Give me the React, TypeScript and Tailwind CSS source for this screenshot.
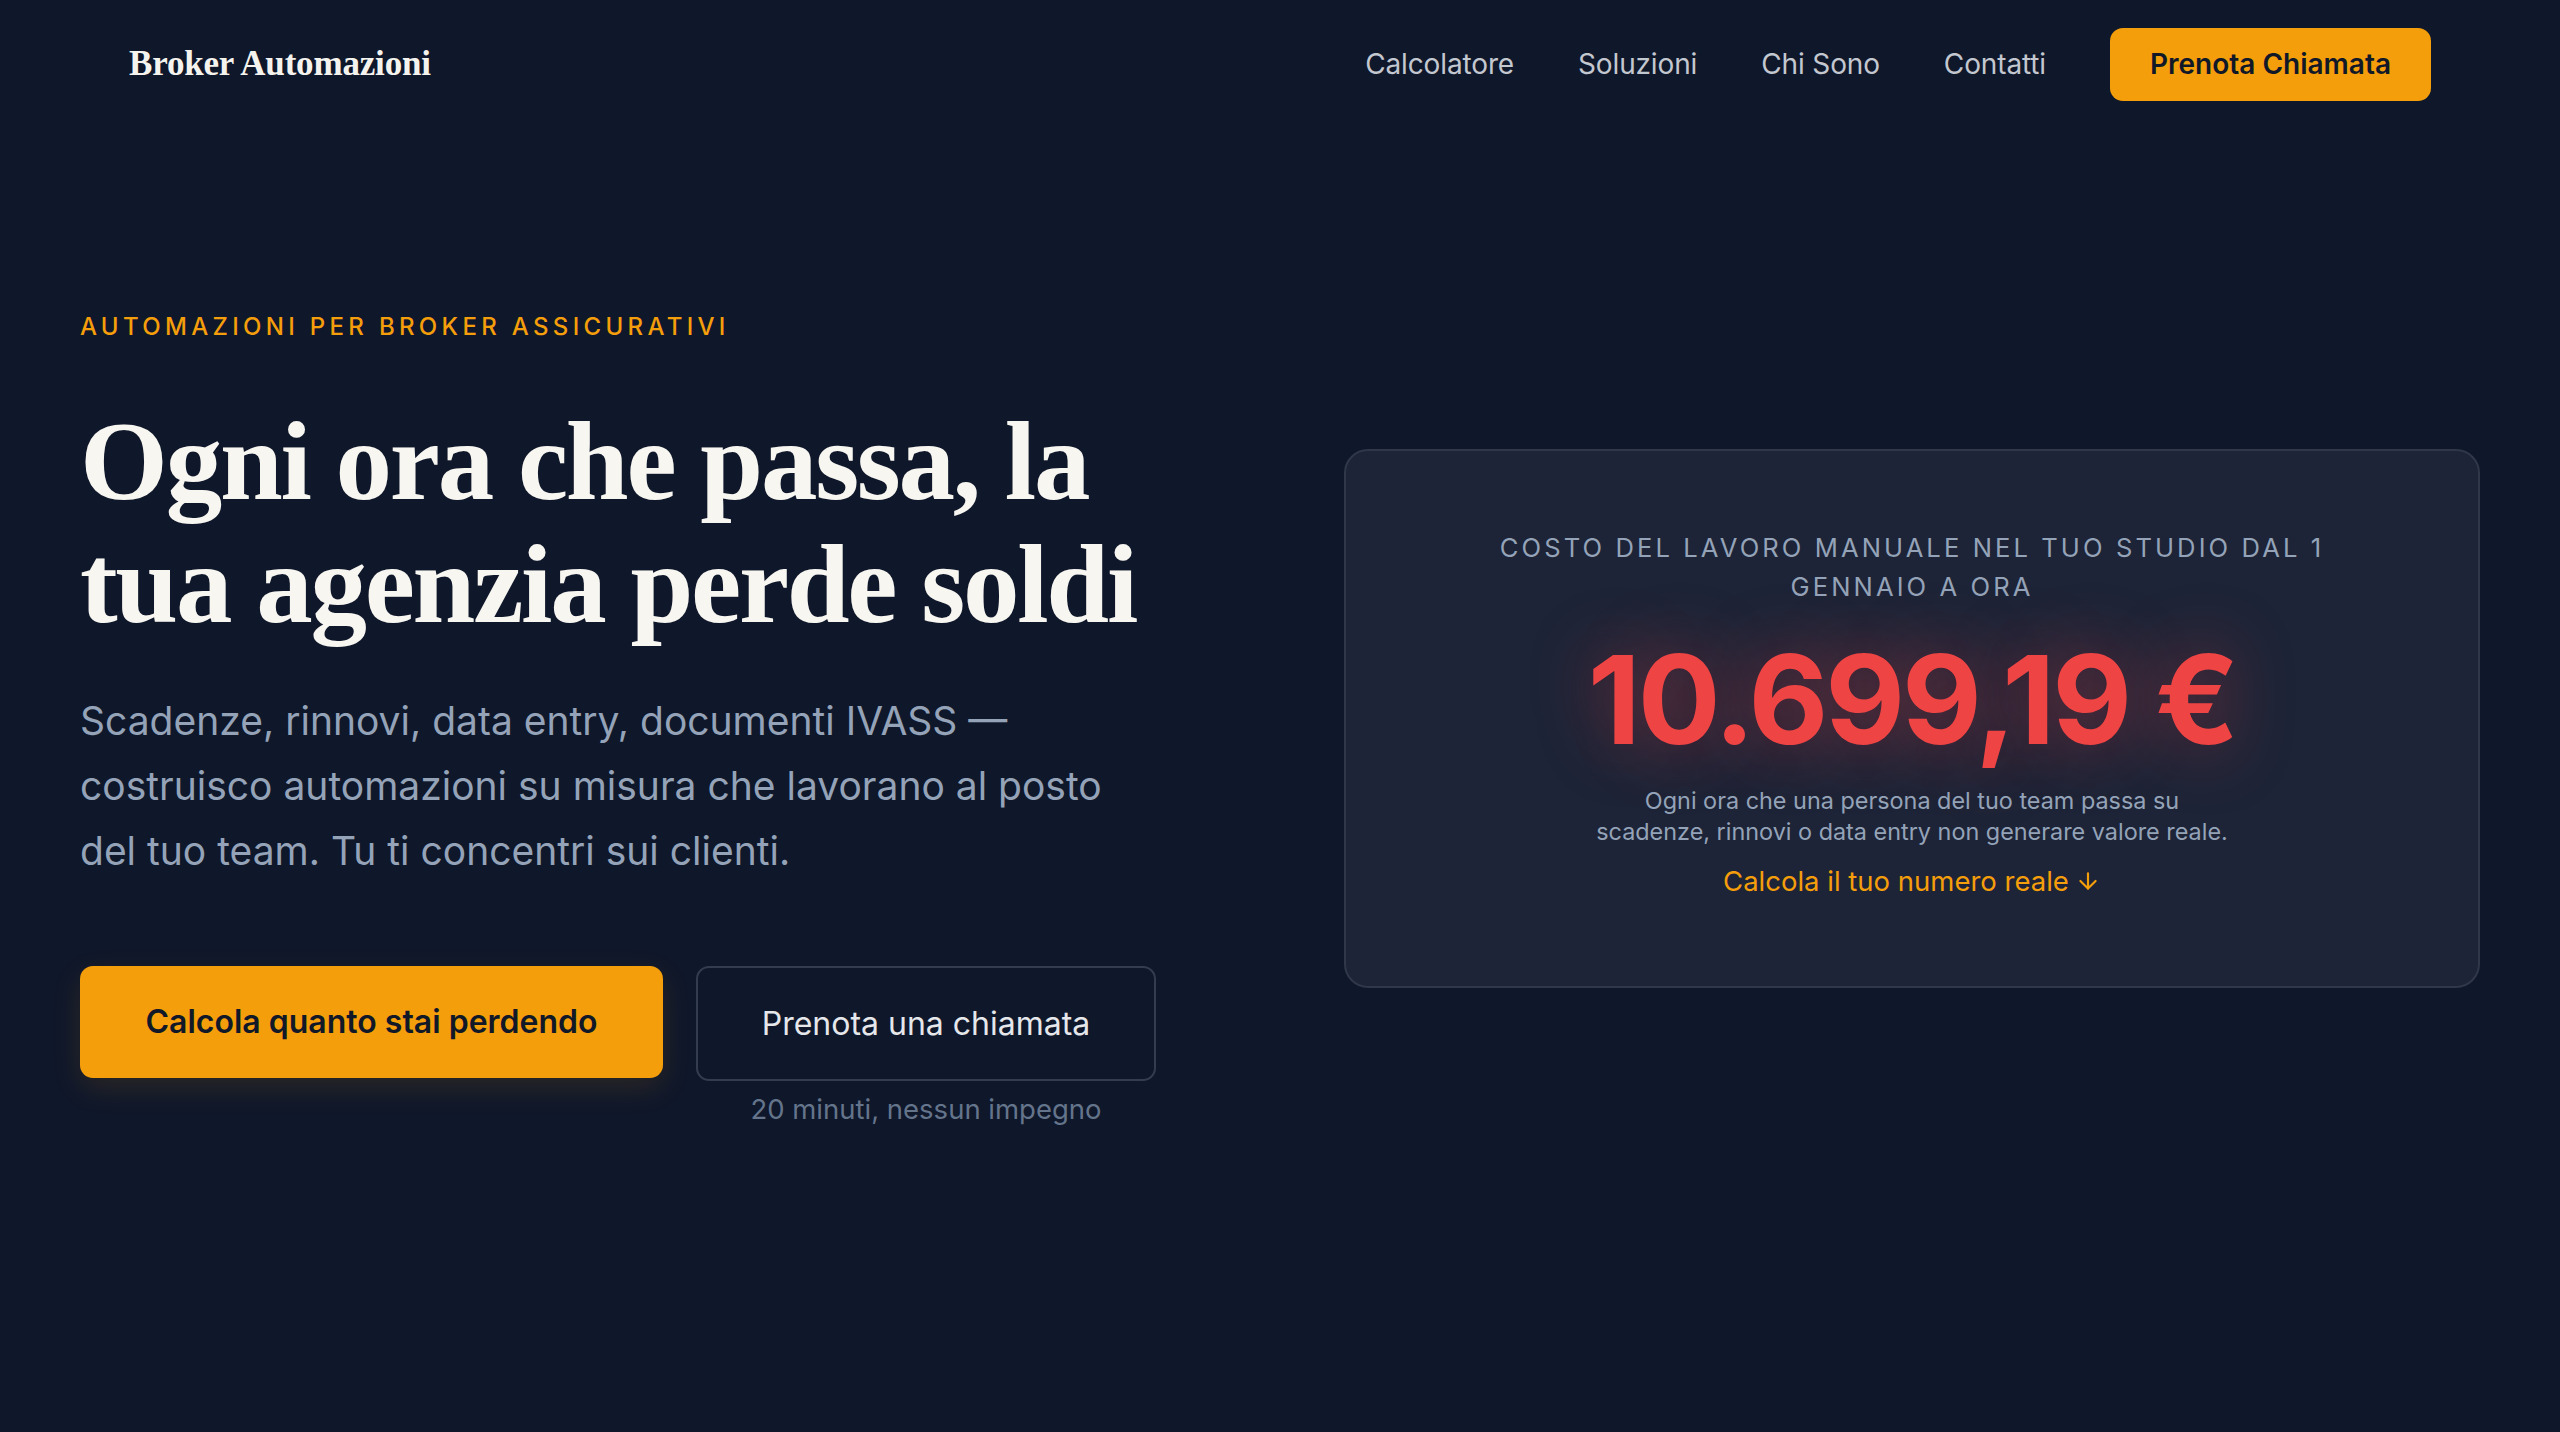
import { ArrowDown } from "lucide-react";

const sans = "font-['Inter','Noto_Sans',sans-serif]";
const serif = "font-['Liberation_Serif','Times_New_Roman',serif]";

function Header() {
  return (
    <header className="flex h-[128px] items-center justify-between px-[129px]">
      <a className={`${serif} text-[35px] font-bold tracking-[-0.005em] text-[#f5f3ee]`}>Broker Automazioni</a>
      <nav className="flex items-center gap-[64px] text-[28px] tracking-[-0.005em] text-[#c3c7cf]">
        <a>Calcolatore</a>
        <a>Soluzioni</a>
        <a>Chi Sono</a>
        <a>Contatti</a>
        <a className="flex h-[73px] items-center rounded-[13px] bg-[#f59e0b] px-[40px] font-semibold tracking-normal text-[#111827]">
          Prenota Chiamata
        </a>
      </nav>
    </header>
  );
}

function CostCard() {
  return (
    <div className="flex h-[539px] flex-col items-center rounded-[24px] border-2 border-[#2f3749] bg-[#1d2437] pt-[77px] text-center">
      <p className="text-[25.6px] leading-[39px] tracking-[0.12em] text-[#94a3b8]">
        COSTO DEL LAVORO MANUALE NEL TUO STUDIO DAL 1<br />GENNAIO A ORA
      </p>
      <p className="mt-[32px] text-[123px] font-bold leading-none tracking-[-0.025em] text-[#ef4444] [text-shadow:0_0_70px_rgba(239,68,68,0.45)]">
        10.699,19 €
      </p>
      <p className="mt-[24px] text-[23.4px] leading-[31px] text-[#94a3b8]">
        Ogni ora che una persona del tuo team passa su
        <br />
        scadenze, rinnovi o data entry non generare valore reale.
      </p>
      <a className="mt-[15px] flex items-center gap-[6px] text-[27.5px] leading-[38px] text-[#f59e0b]">
        Calcola il tuo numero reale
        <ArrowDown size={26} strokeWidth={2} />
      </a>
    </div>
  );
}

export default function App() {
  return (
    <div className={`${sans} min-h-[1432px] bg-[#0f172a] antialiased`}>
      <Header />
      <main className="grid grid-cols-2 items-center gap-[128px] px-[80px] pt-[181px]">
        <div>
          <p className="text-[24px] font-medium leading-[36px] tracking-[0.18em] text-[#f59e0b]">
            AUTOMAZIONI PER BROKER ASSICURATIVI
          </p>
          <h1 className={`${serif} mt-[54px] text-[113px] font-bold leading-[123px] tracking-[-0.02em] text-[#f8f6f1]`}>
            Ogni ora che passa, la
            <br />
            tua agenzia perde soldi
          </h1>
          <p className="mt-[43px] text-[39px] leading-[65px] text-[#94a3b8]">
            Scadenze, rinnovi, data entry, documenti IVASS —
            <br />
            costruisco automazioni su misura che lavorano al posto
            <br />
            del tuo team. Tu ti concentri sui clienti.
          </p>
          <div className="mt-[83px] flex items-start gap-[33px]">
            <a className="flex h-[112px] w-[583px] items-center justify-center rounded-[13px] bg-[#f59e0b] text-[32px] font-semibold text-[#111827] shadow-[0_10px_30px_rgba(245,158,11,0.12)]">
              Calcola quanto stai perdendo
            </a>
            <div className="flex w-[460px] flex-col items-center">
              <a className="flex h-[115px] w-full items-center justify-center rounded-[13px] border-2 border-[#343d4f] text-[32px] text-[#e5e7eb]">
                Prenota una chiamata
              </a>
              <span className="mt-[9px] text-[27.5px] leading-[38px] text-[#64748b]">20 minuti, nessun impegno</span>
            </div>
          </div>
        </div>
        <CostCard />
      </main>
    </div>
  );
}
